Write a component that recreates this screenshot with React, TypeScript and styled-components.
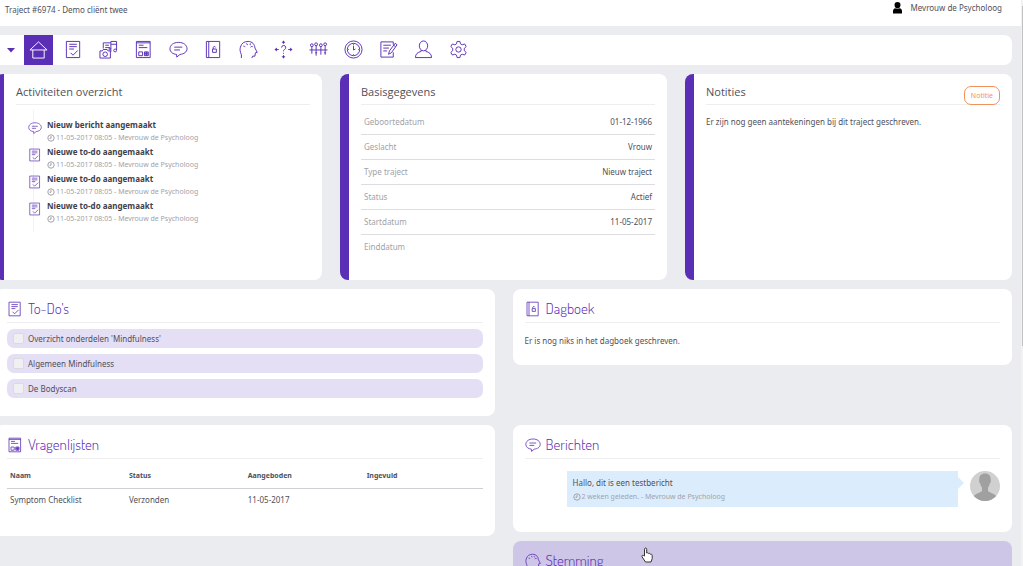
import React from 'react';
import styled, { createGlobalStyle } from 'styled-components';

const purple = '#5a2eb5';

const GlobalStyle = createGlobalStyle`
  *, *::before, *::after { box-sizing: border-box; }
  html, body { margin: 0; height: 100%; overflow: hidden; }
  body {
    background: #ebecf0;
    color: #50505a;
    font-family: "Noto Sans", "Open Sans", sans-serif;
    font-size: 8px;
    line-height: 16px;
  }
  #root { height: 100%; }
  button, input { font: inherit; margin: 0; }
  h2, h3, p, ul { margin: 0; padding: 0; font-weight: 400; }
  ul { list-style: none; }
`;

const Shell = styled.div`
  display: flex;
  height: 100vh;
  overflow: hidden;
`;

const Page = styled.div`
  flex: 1;
  min-width: 0;
`;

const ScrollTrack = styled.div`
  flex: none;
  width: 2px;
  padding: 6px 0 0 1px;
  background: #f1f1f1;
`;

const ScrollThumb = styled.div`
  height: 60vh;
  background: #c1c1c1;
`;

const TopBar = styled.header`
  display: flex;
  justify-content: space-between;
  height: 26px;
  padding: 2px 19px 0 5px;
  background: #fff;
`;

const User = styled.div`
  display: flex;
  gap: 6px;
  margin-top: -2px;
`;

const Toolbar = styled.nav`
  display: flex;
  align-items: center;
  height: 30px;
  margin: 9px 9px 9px 0;
  padding-left: 5px;
  background: #fff;
  border-radius: 0 8px 8px 0;
`;

const CaretButton = styled.button`
  width: 11px;
  height: 30px;
  padding: 0;
  border: 0;
  background: none;
`;

const Tools = styled.div`
  display: flex;
  gap: 6px;
  margin-left: 8px;
`;

const Tool = styled.a<{ $active?: boolean }>`
  display: flex;
  align-items: center;
  justify-content: center;
  width: 29px;
  height: 30px;
  padding-bottom: 2px;
  color: ${p => (p.$active ? '#fff' : purple)};
  background: ${p => (p.$active ? purple : 'transparent')};
`;

const Columns = styled.div<{ $count: number }>`
  display: grid;
  grid-template-columns: repeat(${p => p.$count}, minmax(0, 1fr));
  column-gap: 18px;
  align-items: ${p => (p.$count === 3 ? 'stretch' : 'start')};
  margin: 0 9px 9px -5px;
`;

const Stack = styled.div`
  display: grid;
  gap: 9px;
`;

const Panel = styled.section<{ $bottom?: number; $tinted?: boolean }>`
  padding: 9px 12px ${p => p.$bottom ?? 18}px;
  background: ${p => (p.$tinted ? '#cec6e6' : '#fff')};
  border-radius: 8px;
`;

const InfoCard = styled.section`
  padding: 8px 12px 20px;
  border-left: 9px solid ${purple};
  border-radius: 8px;
  background: #fff;
`;

const CardHead = styled.div`
  display: flex;
  justify-content: space-between;
  height: 23px;
  margin-bottom: 5px;
  border-bottom: 1px solid #eeeef1;
`;

const CardTitle = styled.h2`
  font-family: "Open Sans", sans-serif;
  font-size: 11px;
  line-height: 20px;
`;

const NoteButton = styled.button`
  height: 19px;
  margin-top: 4px;
  padding: 0 6px;
  border: 1px solid #f0935a;
  border-radius: 7px;
  background: #fff;
  color: #f0935a;
  font-size: 7px;
  line-height: 16px;
`;

const PanelTitle = styled.h2`
  display: flex;
  align-items: center;
  gap: 5px;
  height: 25px;
  margin-bottom: 6px;
  padding-bottom: 3px;
  border-bottom: 1px solid #eeeef1;
  color: ${purple};
  font-family: "Dosis", "Open Sans Condensed", "Roboto Condensed", "Noto Sans CJK JP", sans-serif;
  font-size: 15px;
  font-weight: 300;
  line-height: 20px;
`;

const Timeline = styled.ul`
  margin: 5px 0 0 17px;
  padding: 8px 0 6px;
  border-left: 1px solid #f2f2f4;
`;

const Activity = styled.li`
  display: flex;
  gap: 5px;
  height: 27px;
  margin-left: -6px;
  color: ${purple};
`;

const ActivityIcon = styled.span`
  display: flex;
  flex: none;
  width: 14px;
  padding-top: 3px;
`;

const ActivityTitle = styled.h3`
  color: #3f3f4a;
  font-size: 8px;
  font-weight: 700;
  line-height: 14px;
`;

const Meta = styled.p`
  display: flex;
  align-items: center;
  gap: 1px;
  color: #a2a2a8;
  font-size: 7px;
  line-height: 12px;
`;

const Facts = styled.table`
  width: 100%;
  border-collapse: separate;
  border-spacing: 0;

  th, td { height: 25px; padding: 0 3px; border-bottom: 1px solid #dddde0; }
  tr:last-child > * { border-bottom-color: transparent; }
  th { color: #a2a2a8; font-weight: 400; text-align: left; }
  td { text-align: right; }
`;

const Note = styled.p`
  padding: 4px 0;
`;

const TodoList = styled.ul`
  display: grid;
  gap: 6px;
`;

const Todo = styled.label`
  display: flex;
  align-items: center;
  gap: 4px;
  height: 19px;
  padding-left: 6px;
  border-radius: 7px;
  background: #e4dff4;
`;

const Tick = styled.input`
  appearance: none;
  width: 11px;
  height: 11px;
  border: 1px solid #dcdae0;
  border-radius: 2px;
  background: #f0eff1;
`;

const Lists = styled.table`
  width: 100%;
  table-layout: fixed;
  border-collapse: collapse;
  text-align: left;

  th, td { height: 24px; padding: 0 3px; }
  th { height: 23px; font-size: 7px; font-weight: 700; }
  tbody tr { border-top: 1px solid #cfcfd4; }
`;

const Message = styled.div`
  display: flex;
  gap: 12px;
  padding: 6px 0 0 42px;
`;

const Bubble = styled.div`
  position: relative;
  flex: 1;
  height: 36px;
  padding: 4px 6px;
  background: #dbedfc;

  &::after {
    content: "";
    position: absolute;
    top: 6px;
    left: 100%;
    border: 6px solid transparent;
    border-right: 0;
    border-left-color: #dbedfc;
  }
`;

const Pointer = styled.svg`
  position: absolute;
  left: calc(63% - 3px);
  top: 547px;
`;

const StemmingBody = styled.div`
  height: 60px;
`;

type IconName =
  | 'home' | 'todo' | 'media' | 'form' | 'chat' | 'diary' | 'head'
  | 'choice' | 'group' | 'clock' | 'edit' | 'person' | 'gear';

const drawings: Record<IconName, React.ReactNode> = {
  home: <path d="M1 10.500 10 2l9 8.500ZM4 10.500V19h12v-8.500" />,
  todo: <path d="M2.500 1.500h14v17h-14zM5.500 4.500h8M5.500 7h8M5.500 9.500h5M7 13.500l2.500 2.500 5-5" />,
  media: (
    <>
      <path d="M4.500 9V3h8M6.500 5.500h4M6.500 8h5M12.500 10V1.500h6v3h-6M18.500 4v6.500M12.500 12.500v-2" />
      <path d="M1 11.500h2.500l1-1.500h4l1 1.500h2.500v7.500h-11z" />
      <circle cx="6.500" cy="15" r="2.400" />
      <circle cx="11.500" cy="9.500" r="1" />
      <circle cx="17" cy="11" r="1.500" />
    </>
  ),
  form: (
    <>
      <path d="M2.500 1.500h14.500v17H2.500zM2.500 3H17M5 5.500h5M5 8h9M5 12.500h4v4H5z" />
      <path d="M11 12.500h4v4h-4zM11 14.500h4M13 12.500v4" fill="currentColor" fillOpacity=".4" />
    </>
  ),
  chat: <path d="M8 15.200C4 14.800 1 12.500 1 9.300 1 5.500 4.500 2.500 10 2.500s9 3 9 6.800c0 3.200-3.300 5.500-7.500 5.900L8.200 18ZM5.500 7.500h8.500M5.500 10.500h6" />,
  diary: (
    <>
      <path d="M2.500 1.500h14v17h-14zM5 1.500v17M9 9.500h4v3.500H9z" />
      <path d="M9.700 9.500V7.800a1.300 1.300 0 0 1 2.500 0" />
    </>
  ),
  head: (
    <>
      <path d="M2.500 19V15.500C1 12.500 .8 9.500 1.500 7.500 2.500 3.500 5.500 1.500 9.500 1.500c4.500 0 7 3 7.300 7l2.400 4.500-2 .5-.4 3.500h-2.500l-.8 2" />
      <path d="M4.500 6.500c1-.3 1.700.2 1.800 1M8 3.500c0 1 .5 1.500 1.300 1.500M12 3.500c-.5.500-.5 1 0 2M14.500 7c-1-.3-2-.2-2.300.7" />
    </>
  ),
  choice: (
    <>
      <path d="M8 8a2.200 2.200 0 1 1 3 2c-1 .5-1 1-1 2M10 13.500v1M10 1v3M10 16v3M1 10h4M15 10h4" />
      <path d="M10 .5 12 3H8ZM10 19.500l2-2.500H8ZM.5 10 3 8v4ZM19.500 10 17 8v4Z" fill="currentColor" stroke="none" />
    </>
  ),
  group: (
    <>
      <circle cx="3" cy="5.500" r="1.500" /><circle cx="7.500" cy="4.500" r="1.500" />
      <circle cx="12.500" cy="5.500" r="1.500" /><circle cx="17" cy="4.500" r="1.500" />
      <path d="M3 7V14.500M7.500 6V16.500M12.500 7V15.500M17 6V15.500M.5 10.500h19M6.500 13.500h2M16 13.500h2" />
    </>
  ),
  clock: (
    <>
      <circle cx="10" cy="10" r="9" /><circle cx="10" cy="10" r="6.500" />
      <path d="M10 6v4.500l2-1M10 4v1M10 15v1M4 10h1M15 10h1" />
    </>
  ),
  edit: <path d="M15 5V2H2v16h13v-5M4.500 5.500h8M4.500 8.500h6M4.500 11.500h4M10 15l1-3.500L17 3.500l2 1.500-6 8.500ZM15.500 5.500l2 1.500" />,
  person: (
    <>
      <ellipse cx="10" cy="6.200" rx="4.400" ry="5.200" />
      <path d="M7.500 10.500v1.500C4 13 1.500 14.500 1.500 18.500h17c0-4-2.500-5.500-6-6.500v-1.500" />
    </>
  ),
  gear: (
    <>
      <path d="M8.500 1.500h3l.6 2.600 1.800.9 2.600-.8 1.600 2.700-2 1.900v2.400l2 1.900-1.600 2.700-2.600-.8-1.800.9-.6 2.600h-3l-.6-2.600-1.800-.9-2.600.8-1.600-2.700 2-1.900V8.800l-2-1.900 1.600-2.700 2.600.8 1.800-.9Z" />
      <circle cx="10" cy="10" r="2.800" />
    </>
  ),
};

function Icon({ name, size }: { name: IconName; size: number }) {
  return (
    <svg width={size} height={size} viewBox="0 0 20 20" fill="none" stroke="currentColor"
      strokeWidth="1" strokeLinejoin="round" aria-hidden="true">
      {drawings[name]}
    </svg>
  );
}

function MiniClock() {
  return (
    <svg width="8" height="8" viewBox="0 0 8 8" fill="none" stroke="currentColor" aria-hidden="true">
      <circle cx="4" cy="4" r="3.200" />
      <path d="M4 2v2.300H2.500" />
    </svg>
  );
}

function Avatar() {
  return (
    <svg width="30" height="30" viewBox="0 0 30 30" role="img" aria-label="Mevrouw de Psycholoog">
      <circle cx="15" cy="15" r="15" fill="#d0d0d0" />
      <path d="M15 2.500c-4 0-6 2.500-5.700 6.500-.6 1 0 3 1 3.500.3 2 1 3 1.700 4V20c-1 1.500-5.500 2-8.200 5a15 15 0 0 0 22.400 0c-2.700-3-7.200-3.500-8.200-5v-3.500c.8-1 1.400-2 1.700-4 1-.5 1.600-2.500 1-3.500.3-4-1.700-6.500-5.700-6.500Z" fill="#a0a0a0" />
    </svg>
  );
}

const tools: { icon: IconName; label: string }[] = [
  { icon: 'home', label: 'Home' },
  { icon: 'todo', label: "To-Do's" },
  { icon: 'media', label: 'Media' },
  { icon: 'form', label: 'Vragenlijsten' },
  { icon: 'chat', label: 'Berichten' },
  { icon: 'diary', label: 'Dagboek' },
  { icon: 'head', label: 'Stemming' },
  { icon: 'choice', label: 'Keuzes' },
  { icon: 'group', label: 'Groep' },
  { icon: 'clock', label: 'Tijd' },
  { icon: 'edit', label: 'Verslag' },
  { icon: 'person', label: 'Profiel' },
  { icon: 'gear', label: 'Instellingen' },
];

const activities: { icon: IconName; title: string }[] = [
  { icon: 'chat', title: 'Nieuw bericht aangemaakt' },
  { icon: 'todo', title: 'Nieuwe to-do aangemaakt' },
  { icon: 'todo', title: 'Nieuwe to-do aangemaakt' },
  { icon: 'todo', title: 'Nieuwe to-do aangemaakt' },
];

const facts = [
  ['Geboortedatum', '01-12-1966'],
  ['Geslacht', 'Vrouw'],
  ['Type traject', 'Nieuw traject'],
  ['Status', 'Actief'],
  ['Startdatum', '11-05-2017'],
  ['Einddatum', ''],
];

const todos = ["Overzicht onderdelen 'Mindfulness'", 'Algemeen Mindfulness', 'De Bodyscan'];

export default function App() {
  return (
    <Shell>
      <GlobalStyle />
      <Page>
        <TopBar>
          <span>Traject #6974 - Demo cliënt twee</span>
          <User>
            <svg width="13" height="16" viewBox="0 0 13 16" aria-hidden="true">
              <path d="M6.500 2C4.500 2 3.500 3.300 3.500 5S4.700 8.500 6.500 8.500 9.500 6.700 9.500 5 8.500 2 6.500 2ZM2 13.500V11C2 9.500 3 8.500 4.300 8.200c1.300 1 3.100 1 4.400 0C10 8.500 11 9.500 11 11v2.500Z" />
            </svg>
            <span>Mevrouw de Psycholoog</span>
          </User>
        </TopBar>

        <Toolbar aria-label="Traject">
          <CaretButton aria-label="Menu">
            <svg width="8" height="5" viewBox="0 0 8 5"><path d="M0 0h8L4 4.500Z" fill={purple} /></svg>
          </CaretButton>
          <Tools>
            {tools.map((t, i) => (
              <Tool key={t.label} href="#" aria-label={t.label} $active={i === 0}>
                <Icon name={t.icon} size={19} />
              </Tool>
            ))}
          </Tools>
        </Toolbar>

        <Columns $count={3}>
          <InfoCard>
            <CardHead><CardTitle>Activiteiten overzicht</CardTitle></CardHead>
            <Timeline>
              {activities.map((a, i) => (
                <Activity key={i}>
                  <ActivityIcon><Icon name={a.icon} size={14} /></ActivityIcon>
                  <div>
                    <ActivityTitle>{a.title}</ActivityTitle>
                    <Meta><MiniClock />11-05-2017 08:05 - Mevrouw de Psycholoog</Meta>
                  </div>
                </Activity>
              ))}
            </Timeline>
          </InfoCard>

          <InfoCard>
            <CardHead><CardTitle>Basisgegevens</CardTitle></CardHead>
            <Facts>
              <tbody>
                {facts.map(([label, value]) => (
                  <tr key={label}><th scope="row">{label}</th><td>{value}</td></tr>
                ))}
              </tbody>
            </Facts>
          </InfoCard>

          <InfoCard>
            <CardHead>
              <CardTitle>Notities</CardTitle>
              <NoteButton>Notitie</NoteButton>
            </CardHead>
            <Note>Er zijn nog geen aantekeningen bij dit traject geschreven.</Note>
          </InfoCard>
        </Columns>

        <Columns $count={2}>
          <Panel>
            <PanelTitle><Icon name="todo" size={16} />To-Do's</PanelTitle>
            <TodoList>
              {todos.map(t => (
                <li key={t}><Todo><Tick type="checkbox" />{t}</Todo></li>
              ))}
            </TodoList>
          </Panel>
          <Panel $bottom={12}>
            <PanelTitle><Icon name="diary" size={16} />Dagboek</PanelTitle>
            <Note>Er is nog niks in het dagboek geschreven.</Note>
          </Panel>
        </Columns>

        <Columns $count={2}>
          <Panel $bottom={24}>
            <PanelTitle><Icon name="form" size={16} />Vragenlijsten</PanelTitle>
            <Lists>
              <thead>
                <tr><th>Naam</th><th>Status</th><th>Aangeboden</th><th>Ingevuld</th></tr>
              </thead>
              <tbody>
                <tr><td>Symptom Checklist</td><td>Verzonden</td><td>11-05-2017</td><td /></tr>
              </tbody>
            </Lists>
          </Panel>
          <Stack>
            <Panel $bottom={25}>
              <PanelTitle><Icon name="chat" size={16} />Berichten</PanelTitle>
              <Message>
                <Bubble>
                  <p>Hallo, dit is een testbericht</p>
                  <Meta><MiniClock />2 weken geleden. - Mevrouw de Psycholoog</Meta>
                </Bubble>
                <Avatar />
              </Message>
            </Panel>
            <Panel $tinted>
              <PanelTitle><Icon name="head" size={16} />Stemming</PanelTitle>
              <StemmingBody />
            </Panel>
          </Stack>
        </Columns>
      </Page>
      <ScrollTrack><ScrollThumb /></ScrollTrack>
      <Pointer width="12" height="16" viewBox="0 0 12 16" aria-hidden="true">
        <path d="M3.500 9V2.200c0-1.600 2.200-1.600 2.200 0V6c1-.5 1.800 0 2 .6.900-.5 1.600 0 1.800.7 1-.3 1.700.2 1.700 1.200v3L10 15H4.500L1 9.800c-.6-1.200.8-2 1.600-1.200Z" fill="#fff" stroke="#333" />
      </Pointer>
    </Shell>
  );
}
